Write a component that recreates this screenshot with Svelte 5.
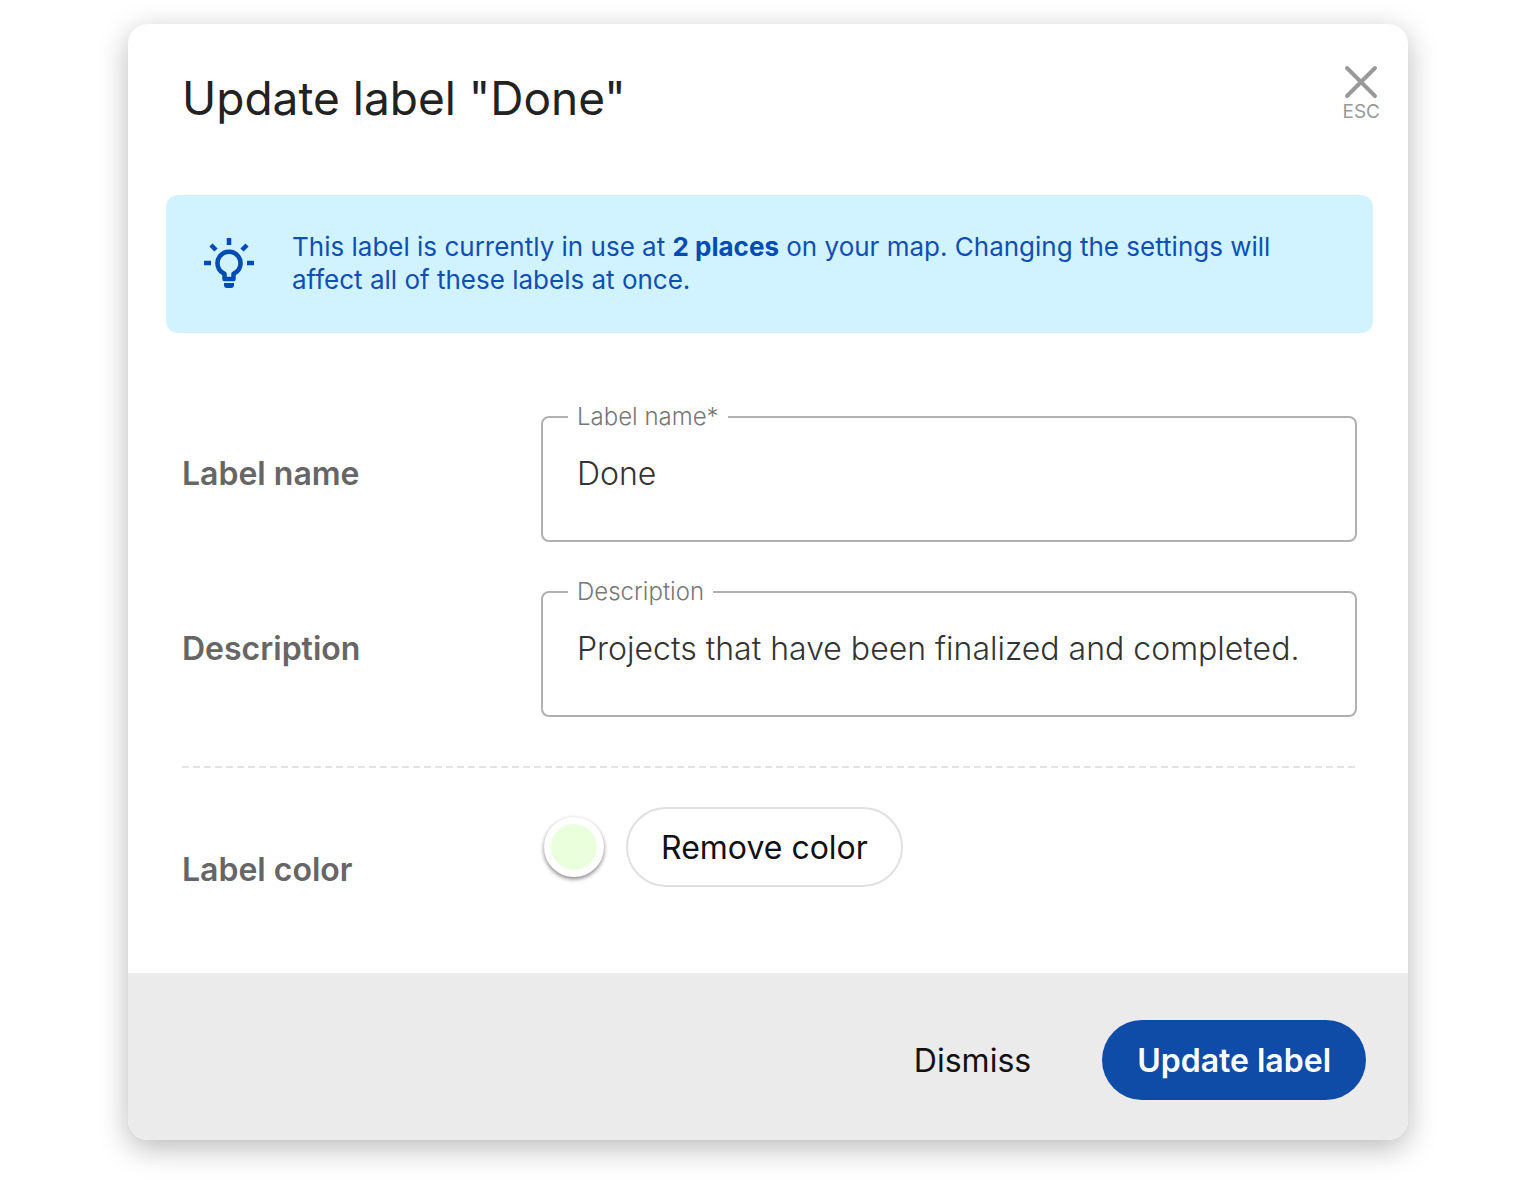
<script>
  let name = $state('Done');
  let description = $state('Projects that have been finalized and completed.');
</script>

<main class="page">
  <form class="dialog" role="dialog" aria-labelledby="dialog-title" onsubmit={(e) => e.preventDefault()}>
    <header class="header">
      <h1 id="dialog-title">Update label "Done"</h1>
      <button class="close" type="button" aria-label="Close (ESC)">
        <svg viewBox="0 0 36 36" width="36" height="36" aria-hidden="true">
          <path d="M4 4L32 32M32 4L4 32" fill="none" stroke="#999" stroke-width="4" stroke-linecap="round" />
        </svg>
        <span>ESC</span>
      </button>
    </header>

    <div class="notice">
      <svg viewBox="0 0 52 52" width="52" height="52" aria-hidden="true">
        <g fill="none" stroke="#004bb4" stroke-width="4.500">
          <path d="M26 1V8M1 26H8M44 26H51M8 8L13 13M44 8L39 13" />
          <path d="M21.500 42V36.800A11.500 11.500 0 1 1 30.500 36.800V42Z" stroke-linejoin="round" />
        </g>
        <path d="M21 46H31V48Q31 51 28 51H24Q21 51 21 48Z" fill="#004bb4" />
      </svg>
      <p>
        This label is currently in use at <strong>2 places</strong> on your map. Changing the settings will
        affect all of these labels at once.
      </p>
    </div>

    <div class="body">
      <div class="row">
        <span class="row-title">Label name</span>
        <fieldset>
          <legend><label for="label-name">Label name*</label></legend>
          <input id="label-name" type="text" bind:value={name} />
        </fieldset>
      </div>
      <div class="row">
        <span class="row-title">Description</span>
        <fieldset>
          <legend><label for="label-description">Description</label></legend>
          <input id="label-description" type="text" bind:value={description} />
        </fieldset>
      </div>
      <div class="divider"></div>
      <div class="row color-row">
        <span class="row-title">Label color</span>
        <div class="color-controls">
          <button class="swatch" type="button" aria-label="Choose color"></button>
          <button class="pill outline" type="button">Remove color</button>
        </div>
      </div>
    </div>

    <footer class="footer">
      <button class="pill plain" type="button">Dismiss</button>
      <button class="pill primary" type="submit">Update label</button>
    </footer>
  </form>
</main>

<style>
  :global(body) {
    margin: 0;
    background: #fff;
  }
  .page {
    padding: 24px 32px 40px;
    font-family: Inter, 'Liberation Sans', sans-serif;
  }
  .dialog {
    max-width: 1280px;
    margin: 0 auto;
    background: #fff;
    border-radius: 20px;
    overflow: hidden;
    box-shadow: 0 8px 30px rgba(0, 0, 0, 0.28);
  }
  button {
    font: inherit;
    border: 0;
    background: none;
    cursor: pointer;
  }
  .header {
    display: flex;
    justify-content: space-between;
    align-items: flex-start;
    padding: 40px 28px 0 54px;
  }
  h1 {
    margin: 0;
    padding-top: 6px;
    font-size: 46px;
    line-height: 56px;
    font-weight: 400;
    color: #222;
  }
  .close {
    display: flex;
    flex-direction: column;
    align-items: center;
    padding: 0;
    color: #999;
    font-size: 19px;
    line-height: 24px;
  }
  .notice {
    display: flex;
    align-items: center;
    gap: 37px;
    margin: 69px 35px 0 38px;
    padding: 35px 48px 37px 37px;
    border-radius: 12px;
    background: #d1f3ff;
  }
  .notice svg {
    flex: none;
  }
  .notice p {
    margin: 0;
    font-size: 26px;
    line-height: 33px;
    color: #0f4fb4;
  }
  .notice strong {
    font-weight: 700;
    color: #004bb4;
  }
  .body {
    padding: 68px 51px 83px 54px;
  }
  .row {
    display: grid;
    grid-template-columns: 359px minmax(0, 1fr);
    align-items: center;
  }
  .row + .row {
    margin-top: 34px;
  }
  .row-title {
    padding-top: 4px;
    font-size: 32px;
    line-height: 40px;
    font-weight: 600;
    color: #666;
  }
  fieldset {
    min-width: 0;
    margin: 0;
    padding: 0 0 27px;
    border: 2px solid #b0b0b0;
    border-radius: 8px;
  }
  legend {
    margin-left: 25px;
    padding: 0 9px;
    font-size: 24px;
    line-height: 32px;
    font-weight: 300;
    color: #777;
  }
  legend label {
    display: block;
  }
  input {
    display: block;
    box-sizing: border-box;
    width: 100%;
    height: 80px;
    padding: 0 34px;
    border: 0;
    outline: 0;
    background: none;
    font: 300 32px Inter, 'Liberation Sans', sans-serif;
    color: #333;
  }
  .divider {
    height: 2px;
    margin: 49px 0 39px;
    background: repeating-linear-gradient(90deg, #e3e3e3 0 7px, transparent 7px 11px);
  }
  .color-row {
    align-items: start;
  }
  .color-row .row-title {
    padding-top: 43px;
  }
  .color-controls {
    display: flex;
    align-items: center;
    gap: 22px;
    padding-left: 3px;
  }
  .swatch {
    box-sizing: border-box;
    width: 60px;
    height: 60px;
    padding: 0;
    border: 7px solid #fff;
    border-radius: 50%;
    background: #eaffdc;
    box-shadow: 0 2px 4px rgba(0, 0, 0, 0.5);
  }
  .pill {
    height: 80px;
    padding: 2px 35px 0;
    border-radius: 40px;
    font-size: 32px;
    line-height: 40px;
    color: #111;
  }
  .outline {
    padding: 2px 33px 0;
    border: 2px solid #e0e0e0;
  }
  .footer {
    display: flex;
    justify-content: flex-end;
    gap: 36px;
    padding: 47px 42px 40px;
    background: #ebebeb;
  }
  .primary {
    background: #0f4ca8;
    color: #fff;
    font-weight: 600;
  }
</style>
